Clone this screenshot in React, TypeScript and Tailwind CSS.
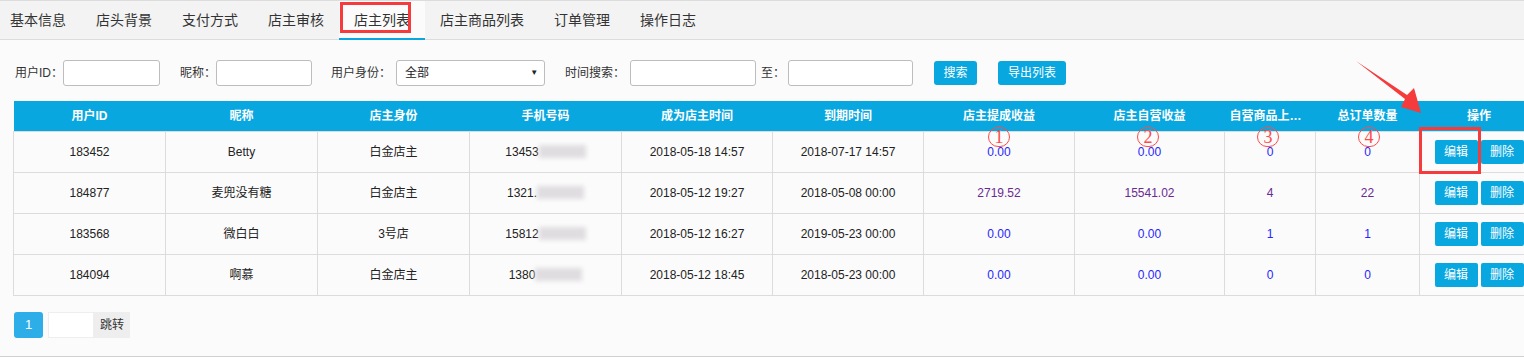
import React from "react";

const tabs = ["基本信息", "店头背景", "支付方式", "店主审核", "店主列表", "店主商品列表", "订单管理", "操作日志"];

const cols = [
  { title: "用户ID", w: 152 },
  { title: "昵称", w: 152 },
  { title: "店主身份", w: 152 },
  { title: "手机号码", w: 152 },
  { title: "成为店主时间", w: 151 },
  { title: "到期时间", w: 151 },
  { title: "店主提成收益", w: 151 },
  { title: "店主自营收益", w: 150 },
  { title: "自营商品上架数量", w: 91 },
  { title: "总订单数量", w: 104 },
  { title: "操作", w: 119 },
];

type Row = {
  id: string;
  name: string;
  role: string;
  phone: string;
  start: string;
  end: string;
  a: string;
  b: string;
  c: string;
  d: string;
  visited?: boolean;
};

const rows: Row[] = [
  { id: "183452", name: "Betty", role: "白金店主", phone: "13453", start: "2018-05-18 14:57", end: "2018-07-17 14:57", a: "0.00", b: "0.00", c: "0", d: "0" },
  { id: "184877", name: "麦兜没有糖", role: "白金店主", phone: "1321.", start: "2018-05-12 19:27", end: "2018-05-08 00:00", a: "2719.52", b: "15541.02", c: "4", d: "22", visited: true },
  { id: "183568", name: "微白白", role: "3号店", phone: "15812", start: "2018-05-12 16:27", end: "2019-05-23 00:00", a: "0.00", b: "0.00", c: "1", d: "1" },
  { id: "184094", name: "啊慕", role: "白金店主", phone: "1380", start: "2018-05-12 18:45", end: "2018-05-23 00:00", a: "0.00", b: "0.00", c: "0", d: "0" },
];

const Marker = ({ n, left }: { n: string; left: number }) => (
  <span
    className="absolute top-[127px] w-[22px] h-[20px] rounded-full border border-[#ff4a4a] text-[#ff4a4a] flex items-center justify-center text-[18px] leading-none font-['Liberation_Serif',serif]"
    style={{ left }}
  >
    {n}
  </span>
);

const App = () => {
  return (
    <div className="relative w-[1524px] h-[357px] overflow-hidden bg-[#fbfbfb] border-b border-[#cfcfcf] text-[12px] text-[#222] font-['Liberation_Sans','Noto_Sans_CJK_SC',sans-serif]">
      {/* tabs */}
      <div className="h-[40px] bg-[#f3f3f3] border-t border-b border-[#dcdcdc] flex">
        <div className="flex h-full ml-[-5px]">
          {tabs.map((t) => (
            <div
              key={t}
              className={
                t === "店主列表"
                  ? "px-[15px] h-[39px] flex items-center text-[14px] text-[#333] bg-[#fbfbfb] border-b-2 border-[#0aa6e0] pt-[1px]"
                  : "px-[15px] h-[39px] flex items-center text-[14px] text-[#333]"
              }
            >
              {t}
            </div>
          ))}
        </div>
      </div>

      {/* filters */}
      <div className="flex items-center h-[26px] mt-[20px] pl-[15px] text-[#333]">
        <span>用户ID：</span>
        <input className="w-[97px] h-[26px] bg-white border border-[#bdbdbd] rounded-[3px]" />
        <span className="ml-[20px]">昵称：</span>
        <input className="w-[96px] h-[26px] bg-white border border-[#bdbdbd] rounded-[3px]" />
        <span className="ml-[19px]">用户身份：</span>
        <div className="ml-[5px] w-[149px] h-[26px] bg-white border border-[#bdbdbd] rounded-[3px] flex items-center justify-between pl-[8px] pr-[6px]">
          <span className="text-[#222]">全部</span>
          <span className="text-[8px] text-[#222]">▼</span>
        </div>
        <span className="ml-[20px]">时间搜索：</span>
        <input className="ml-[5px] w-[126px] h-[26px] bg-white border border-[#bdbdbd] rounded-[3px]" />
        <span className="ml-[5px]">至：</span>
        <input className="ml-[3px] w-[125px] h-[26px] bg-white border border-[#bdbdbd] rounded-[3px]" />
        <button className="ml-[21px] w-[43px] h-[24px] bg-[#09a7e0] text-white rounded-[3px]">搜索</button>
        <button className="ml-[21px] w-[68px] h-[24px] bg-[#09a7e0] text-white rounded-[3px]">导出列表</button>
      </div>

      {/* table */}
      <table className="ml-[13px] mt-[15px] w-[1525px] table-fixed border-collapse">
        <colgroup>
          {cols.map((c) => (
            <col key={c.title} style={{ width: c.w }} />
          ))}
        </colgroup>
        <thead>
          <tr className="h-[30px] bg-[#09a7e0] text-white font-bold">
            {cols.map((c) => (
              <th key={c.title} className="px-[5px] truncate font-bold">
                {c.title}
              </th>
            ))}
          </tr>
        </thead>
        <tbody>
          {rows.map((r) => {
            const num = r.visited ? "text-[#6a2a93]" : "text-[#2626ff]";
            return (
              <tr key={r.id} className="h-[41px] text-center">
                <td className="border border-[#dcdcdc]">{r.id}</td>
                <td className="border border-[#dcdcdc]">{r.name}</td>
                <td className="border border-[#dcdcdc]">{r.role}</td>
                <td className="border border-[#dcdcdc]">
                  <span className="inline-flex items-center">
                    <span className="text-[#222]">{r.phone}</span>
                    <span className="inline-block w-[47px] h-[13px] bg-[#e0dde0] blur-[2px]" />
                  </span>
                </td>
                <td className="border border-[#dcdcdc]">{r.start}</td>
                <td className="border border-[#dcdcdc]">{r.end}</td>
                <td className={`border border-[#dcdcdc] ${num}`}>{r.a}</td>
                <td className={`border border-[#dcdcdc] ${num}`}>{r.b}</td>
                <td className={`border border-[#dcdcdc] ${num}`}>{r.c}</td>
                <td className={`border border-[#dcdcdc] ${num}`}>{r.d}</td>
                <td className="border border-[#dcdcdc]">
                  <div className="flex justify-center gap-[3px]">
                    <button className="w-[43px] h-[24px] bg-[#09a7e0] text-white rounded-[2px]">编辑</button>
                    <button className="w-[43px] h-[24px] bg-[#09a7e0] text-white rounded-[2px]">删除</button>
                  </div>
                </td>
              </tr>
            );
          })}
        </tbody>
      </table>

      {/* pagination */}
      <div className="flex items-center ml-[14px] mt-[16px] h-[26px]">
        <span className="w-[29px] h-[26px] bg-[#2eaee8] text-white rounded-[3px] flex items-center justify-center text-[13px]">1</span>
        <input className="ml-[5px] w-[46px] h-[26px] bg-white border border-[#eeeeee]" />
        <span className="w-[36px] h-[26px] bg-[#eeeeee] flex items-center justify-center text-[#333]">跳转</span>
      </div>

      {/* annotations */}
      <div className="absolute left-[340px] top-[2px] w-[71px] h-[31px] border-[3px] border-[#f53b3b]" />
      <div className="absolute left-[1419px] top-[127px] w-[62px] h-[47px] border-[3px] border-[#f53b3b]" />
      <Marker n="1" left={988} />
      <Marker n="2" left={1137} />
      <Marker n="3" left={1257} />
      <Marker n="4" left={1358} />
      <svg className="absolute left-0 top-0 pointer-events-none" width={1524} height={357}>
        <polygon
          points="1356,61 1407,95 1414,88 1421,113 1401,107 1405,99"
          fill="#f53b3b"
        />
      </svg>
    </div>
  );
};

export default App;
